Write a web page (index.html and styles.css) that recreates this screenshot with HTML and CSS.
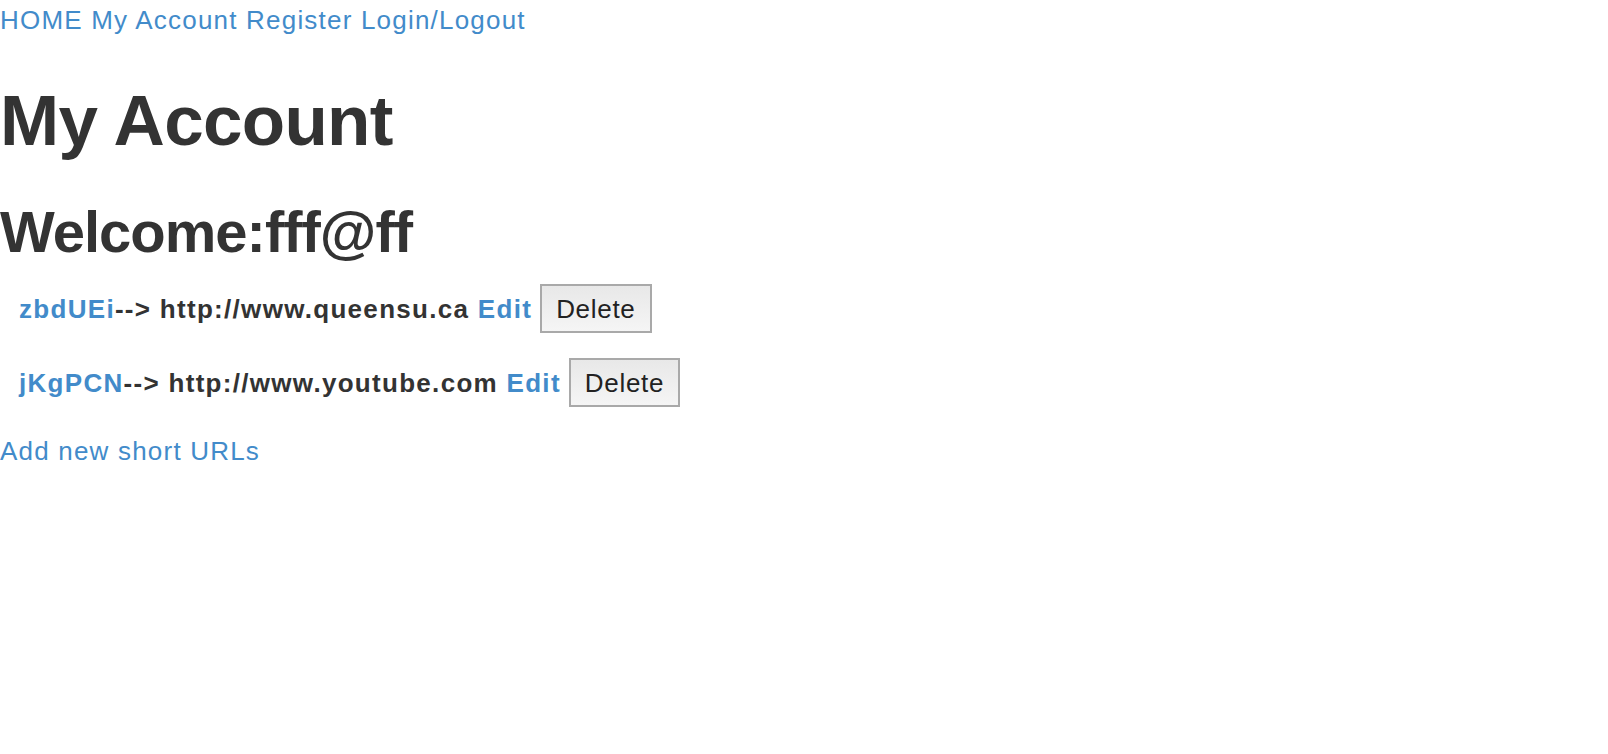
FILE: index.html
```html
<!DOCTYPE html>
<html>
<head>
<meta charset="utf-8">
<title>My Account</title>
<link rel="stylesheet" href="styles.css">
</head>
<body>
<nav class="topnav"><a href="#">HOME</a> <a href="#">My Account</a> <a href="#">Register</a> <a href="#">Login/Logout</a></nav>
<h1 class="title">My Account</h1>
<h2 class="welcome">Welcome:fff@ff</h2>
<ul class="urls">
  <li class="url-row"><span class="entry"><a href="#">zbdUEi</a>--&gt; http://www.queensu.ca <a href="#">Edit</a></span><button class="del">Delete</button></li>
  <li class="url-row"><span class="entry"><a href="#">jKgPCN</a>--&gt; http://www.youtube.com <a href="#">Edit</a></span><button class="del">Delete</button></li>
</ul>
<a class="add" href="#">Add new short URLs</a>
</body>
</html>
```
FILE: styles.css
```css
html, body {
  margin: 0;
  padding: 0;
  background: #fff;
}
body {
  font-family: "Liberation Sans", Arial, Helvetica, sans-serif;
  color: #333;
  font-size: 26px;
  line-height: 37px;
  letter-spacing: 1.2px;
}
a {
  color: #428bca;
  text-decoration: none;
}
.topnav {
  display: block;
  height: 37px;
  padding-top: 2px;
}
.title {
  margin: 43px 0 0 0;
  font-size: 71px;
  line-height: 78px;
  font-weight: bold;
  letter-spacing: -0.7px;
}
.welcome {
  margin: 40px 0 0 0;
  font-size: 58px;
  line-height: 64px;
  font-weight: bold;
  letter-spacing: -1px;
}
.urls {
  list-style: none;
  margin: 20px 0 0 0;
  padding: 0 0 0 19px;
  display: flex;
  flex-direction: column;
  gap: 25px;
}
.url-row {
  display: flex;
  align-items: center;
  height: 49px;
  gap: 8px;
}
.entry {
  font-weight: bold;
  line-height: 30px;
  letter-spacing: 1.3px;
}
.del {
  font-family: "Liberation Sans", Arial, Helvetica, sans-serif;
  font-size: 26px;
  color: #222;
  line-height: 30px;
  letter-spacing: 0.7px;
  padding: 7.5px 14px;
  border: 2px solid #a9a9a9;
  border-radius: 0;
  background: linear-gradient(#e8e8e8, #f5f5f5);
  height: 49px;
}
.add {
  display: block;
  margin-top: 26px;
}
```
